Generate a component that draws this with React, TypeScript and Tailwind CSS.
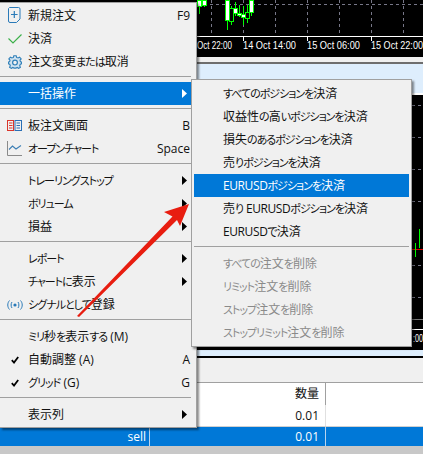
const menuFont = 'font-["Open_Sans","Noto_Sans_CJK_JP",sans-serif] text-[12px] [font-feature-settings:"palt"] leading-none';

type Row = { label?: string; icon?: React.ReactNode; hint?: string; sub?: boolean; active?: boolean; off?: boolean; sep?: boolean };

// かなだけ詰める (元のUIフォントのかなは幅が狭い)
function Label({ text }: { text: string }) {
  const parts = text.split(/([\u3040-\u30ff]+)/);
  return (
    <span>
      {parts.map((p, i) =>
        /^[\u3040-\u30ff]/.test(p) ? (
          <span key={i} className="text-[11px] tracking-[-1px]">{p}</span>
        ) : (
          <span key={i} className={/[A-Z]{3}/.test(p) ? 'tracking-[-0.4px]' : ''}>{p}</span>
        ),
      )}
    </span>
  );
}

function Arrow({ white }: { white?: boolean }) {
  return (
    <svg width="5" height="9" viewBox="0 0 5 9" className="ml-auto mr-1 shrink-0">
      <path d="M0 0L5 4.5L0 9Z" fill={white ? '#fff' : '#000'} />
    </svg>
  );
}

const DocIcon = (
  <svg width="13" height="16" viewBox="0 0 13 16" fill="none" className="mt-[-1px]">
    <path d="M1.5 .5H10.5A1.5 1.5 0 0 1 12 2V12L8.5 15.5H2A1.5 1.5 0 0 1 .5 14V1.5Z" stroke="#2a7ab8" />
    <path d="M6.3 4V11M3 7.5H9.6" stroke="#2a7ab8" strokeWidth="1.2" />
  </svg>
);
const CheckIcon = (
  <svg width="14" height="10" viewBox="0 0 14 10" fill="none">
    <path d="M.5 4.5L5 9L13.5 .5" stroke="#3cb04a" strokeWidth="1.2" />
  </svg>
);
const GearIcon = (
  <svg width="14" height="14" viewBox="0 0 14 14" fill="none">
    <path
      d="M5.8.7H8.2L8.6 2.4L10.1 3L11.6 2.1L13.2 3.9L12 5.2L12.4 6.6L13.6 7.2V8.8L12.3 9.3L11.7 10.8L12.4 12.2L10.6 13.4L9.3 12.5L7.9 13.1H6.1L4.7 12.5L3.4 13.4L1.6 12.2L2.3 10.8L1.7 9.3L.4 8.8V7.2L1.6 6.6L2 5.2L.8 3.9L2.4 2.1L3.9 3L5.4 2.4Z"
      stroke="#2f7fb8"
      strokeWidth="1.1"
      fill="#cfe2f0"
    />
    <circle cx="7" cy="7.6" r="2.4" stroke="#2f7fb8" strokeWidth="1.2" fill="#f0f0f0" />
  </svg>
);
const BookIcon = (
  <svg width="15" height="11" viewBox="0 0 15 11" fill="none">
    <rect x=".5" y=".5" width="6" height="10" stroke="#d9352b" />
    <path d="M2 3H5.5M2 5.5H5.5M2 8H5.5" stroke="#d9352b" />
    <rect x="8" y=".5" width="6.5" height="10" stroke="#2a6fb5" />
    <path d="M9.5 3H13M9.5 5.5H13M9.5 8H13" stroke="#2a6fb5" />
  </svg>
);
const ChartIcon = (
  <svg width="15" height="15" viewBox="0 0 15 15" fill="none">
    <path d="M.5 0V14.5H15" stroke="#8a8a8a" />
    <path d="M2 8.5L5.5 5L9 8L14 4.5" stroke="#3d7fb5" strokeWidth="1.1" />
  </svg>
);
const SignalIcon = (
  <svg width="16" height="10" viewBox="0 0 16 10" fill="none">
    <path d="M2.5 .5C.2 3 .2 7 2.5 9.5M5 2C3.8 3.5 3.8 6.5 5 8M13.5 .5C15.8 3 15.8 7 13.5 9.5M11 2C12.2 3.5 12.2 6.5 11 8" stroke="#2a7ab8" />
    <circle cx="8" cy="5" r="1.6" fill="#2a7ab8" />
  </svg>
);
const Tick = (
  <svg width="8" height="8" viewBox="0 0 8 8" fill="none">
    <path d="M.8 4.2L3 6.5L7.2 1" stroke="#000" strokeWidth="1.8" />
  </svg>
);

const mainRows: Row[] = [
  { label: '新規注文', icon: DocIcon, hint: 'F9' },
  { label: '決済', icon: CheckIcon },
  { label: '注文変更または取消', icon: GearIcon },
  { sep: true },
  { label: '一括操作', sub: true, active: true },
  { sep: true },
  { label: '板注文画面', icon: BookIcon, hint: 'B' },
  { label: 'オープンチャート', icon: ChartIcon, hint: 'Space' },
  { sep: true },
  { label: 'トレーリングストップ', sub: true },
  { label: 'ボリューム', sub: true },
  { label: '損益', sub: true },
  { sep: true },
  { label: 'レポート', sub: true },
  { label: 'チャートに表示', sub: true },
  { label: 'シグナルとして登録', icon: SignalIcon },
  { sep: true },
  { label: 'ミリ秒を表示する (M)' },
  { label: '自動調整 (A)', icon: Tick, hint: 'A' },
  { label: 'グリッド (G)', icon: Tick, hint: 'G' },
  { sep: true },
  { label: '表示列', sub: true },
];

const subRows: Row[] = [
  { label: 'すべてのポジションを決済' },
  { label: '収益性の高いポジションを決済' },
  { label: '損失のあるポジションを決済' },
  { label: '売りポジションを決済' },
  { label: 'EURUSDポジションを決済', active: true },
  { label: '売り EURUSDポジションを決済' },
  { label: 'EURUSDで決済' },
  { sep: true },
  { label: 'すべての注文を削除', off: true },
  { label: 'リミット注文を削除', off: true },
  { label: 'ストップ注文を削除', off: true },
  { label: 'ストップリミット注文を削除', off: true },
];

function MenuRows({ rows, indent }: { rows: Row[]; indent: string }) {
  return (
    <>
      {rows.map((r, i) =>
        r.sep ? (
          <div key={i} className="h-[9px] pt-[3px]">
            <div className="h-px bg-[#a0a0a0]" />
          </div>
        ) : (
          <div
            key={i}
            className={`h-[23px] flex items-center ${indent} ${r.active ? 'bg-[#0078d7] text-white' : r.off ? 'text-[#8a8a8a]' : 'text-[#111]'}`}
          >
            <Label text={r.label ?? ''} />
            {r.hint && <span className="ml-auto pr-px">{r.hint}</span>}
            {r.sub && <Arrow white={r.active} />}
          </div>
        ),
      )}
    </>
  );
}

// 上のチャート (ローソク足は見える範囲だけ)
const topCandles = [
  { x: 199, w0: 0, w1: 14, b0: 0, b1: 6, fill: '#fff' },
  { x: 204, w0: 0, w1: 7, b0: 0, b1: 5, fill: '#fff' },
  { x: 227, w0: 0, w1: 30, b0: 0, b1: 20, fill: '#fff' },
  { x: 231, w0: 6, w1: 25, b0: 8, b1: 21, fill: '#000' },
  { x: 235, w0: 2, w1: 16, b0: 8, b1: 13, fill: '#fff' },
  { x: 239, w0: 5, w1: 17, b0: 13, b1: 15, fill: '#fff' },
  { x: 243, w0: 6, w1: 25, b0: 14, b1: 17, fill: '#fff' },
  { x: 247, w0: 5, w1: 23, b0: 12, b1: 18, fill: '#000' },
  { x: 251, w0: 0, w1: 16, b0: 0, b1: 12, fill: '#fff' },
];

function TopChart() {
  return (
    <svg width="423" height="57" viewBox="0 0 423 57" className="block bg-black">
      {[211, 243, 275, 307, 339, 371, 403].map(x => (
        <line key={x} x1={x + 0.5} y1="0" x2={x + 0.5} y2="36" stroke="#778" strokeDasharray="3 3" />
      ))}
      <line x1="0" y1="4.5" x2="423" y2="4.5" stroke="#778" strokeDasharray="3 3" />
      {topCandles.map(c => (
        <g key={c.x}>
          <line x1={c.x + 0.5} y1={c.w0} x2={c.x + 0.5} y2={c.w1} stroke="#00ff00" />
          <rect x={c.x - 1.5} y={c.b0 + 0.5} width="4" height={c.b1 - c.b0} fill={c.fill} stroke="#00ff00" />
        </g>
      ))}
      <line x1="0" y1="36.5" x2="423" y2="36.5" stroke="#fff" />
      {[243, 307, 371].map(x => (
        <line key={x} x1={x + 0.5} y1="36" x2={x + 0.5} y2="41" stroke="#fff" />
      ))}
      <g fill="#fff" fontFamily="'Liberation Sans', sans-serif" fontSize="11">
        <text x="197" y="49" textLength="35" lengthAdjust="spacingAndGlyphs">Oct 22:00</text>
        <text x="243" y="49" textLength="53" lengthAdjust="spacingAndGlyphs">14 Oct 14:00</text>
        <text x="307" y="49" textLength="53" lengthAdjust="spacingAndGlyphs">15 Oct 06:00</text>
        <text x="371" y="49" textLength="52" lengthAdjust="spacingAndGlyphs">15 Oct 22:00</text>
      </g>
    </svg>
  );
}

function LowerChart() {
  return (
    <svg width="423" height="255" viewBox="0 95 423 255" className="block bg-black">
      {[105, 137, 169, 201, 265, 297].map(y => (
        <line key={y} x1="400" y1={y + 0.5} x2="423" y2={y + 0.5} stroke="#778" strokeDasharray="3 3" />
      ))}
      <line x1="412" y1="249.5" x2="423" y2="249.5" stroke="#e00000" />
      <line x1="415.5" y1="243" x2="415.5" y2="257" stroke="#00ff00" />
      <line x1="419.5" y1="229" x2="419.5" y2="248" stroke="#00ff00" />
      <line x1="0" y1="319.5" x2="423" y2="319.5" stroke="#777" />
      <line x1="0" y1="329.5" x2="423" y2="329.5" stroke="#fff" />
      <text x="413" y="342" fill="#fff" fontFamily="'Liberation Sans', sans-serif" fontSize="11" textLength="10" lengthAdjust="spacingAndGlyphs">:00</text>
    </svg>
  );
}

export default function App() {
  return (
    <div className="relative w-[423px] h-[454px] overflow-hidden bg-[#c8c8c8]">
      <TopChart />
      <div className="h-[5px] bg-[#f0f0f0]" />
      <div className="h-[2px] bg-[#6e6e6e]" />
      <div className="h-[29px] bg-[#deeefd]" />
      <div className="h-[2px] bg-white" />
      <LowerChart />
      <div className="h-[6px] bg-[#deeefd]" />
      <div className="h-[2px] bg-black" />
      <div className="h-[25px] bg-[#f0f0f0] border-b border-[#a0a0a0]" />

      <div className={`${menuFont} bg-white`}>
        <div className="flex h-[22px] items-center">
          <div className="w-[326px] h-full border-r border-[#a0a0a0] flex items-center justify-end pr-[6px] text-[#111]">数量</div>
        </div>
        <div className="flex h-[21px] items-center border-b border-[#d0d0d0] box-content">
          <div className="w-[326px] h-full border-r border-[#e0e0e0] flex items-center justify-end pr-[6px] text-[#111]">0.01</div>
        </div>
        <div className="flex h-[19px] bg-[#0078d7] text-white">
          <div className="w-[150px] h-full border-r border-[#b8d4ee] flex items-center justify-end pr-[3px]">sell</div>
          <div className="w-[176px] h-full border-r border-[#b8d4ee] flex items-center justify-end pr-[6px]">0.01</div>
        </div>
      </div>

      {/* 右クリックメニュー */}
      <div className={`${menuFont} absolute left-0 top-[2px] w-[197px] bg-[#f0f0f0] border-r border-b border-t border-[#a0a0a0] pt-px pb-px shadow-[2px_2px_2px_rgba(0,0,0,0.45)]`}>
        <div className="mr-[5px] relative">
          <MenuRows rows={mainRows.map(r => (r.icon ? { ...r, icon: undefined } : r))} indent="pl-[28px]" />
          <div className="absolute left-0 top-0 w-[28px] pointer-events-none">
            {mainRows.map((r, i) =>
              r.sep ? (
                <div key={i} className="h-[9px]" />
              ) : (
                <div key={i} className="h-[23px] flex items-center justify-center pl-[1px]">{r.icon}</div>
              ),
            )}
          </div>
        </div>
      </div>

      {/* 一括操作のサブメニュー */}
      <div className={`${menuFont} absolute left-[191px] top-[79px] w-[221px] bg-[#f0f0f0] border border-[#a0a0a0] p-[2px] shadow-[2px_2px_2px_rgba(0,0,0,0.45)]`}>
        <MenuRows rows={subRows} indent="pl-[29px]" />
      </div>

      {/* 注釈の矢印 */}
      <svg width="423" height="454" viewBox="0 0 423 454" className="absolute left-0 top-0 pointer-events-none">
        <polygon points="189,204 164,212 172.5,216.5 77,316 79,317 177,220 180,226" fill="#e81d10" />
      </svg>
    </div>
  );
}
